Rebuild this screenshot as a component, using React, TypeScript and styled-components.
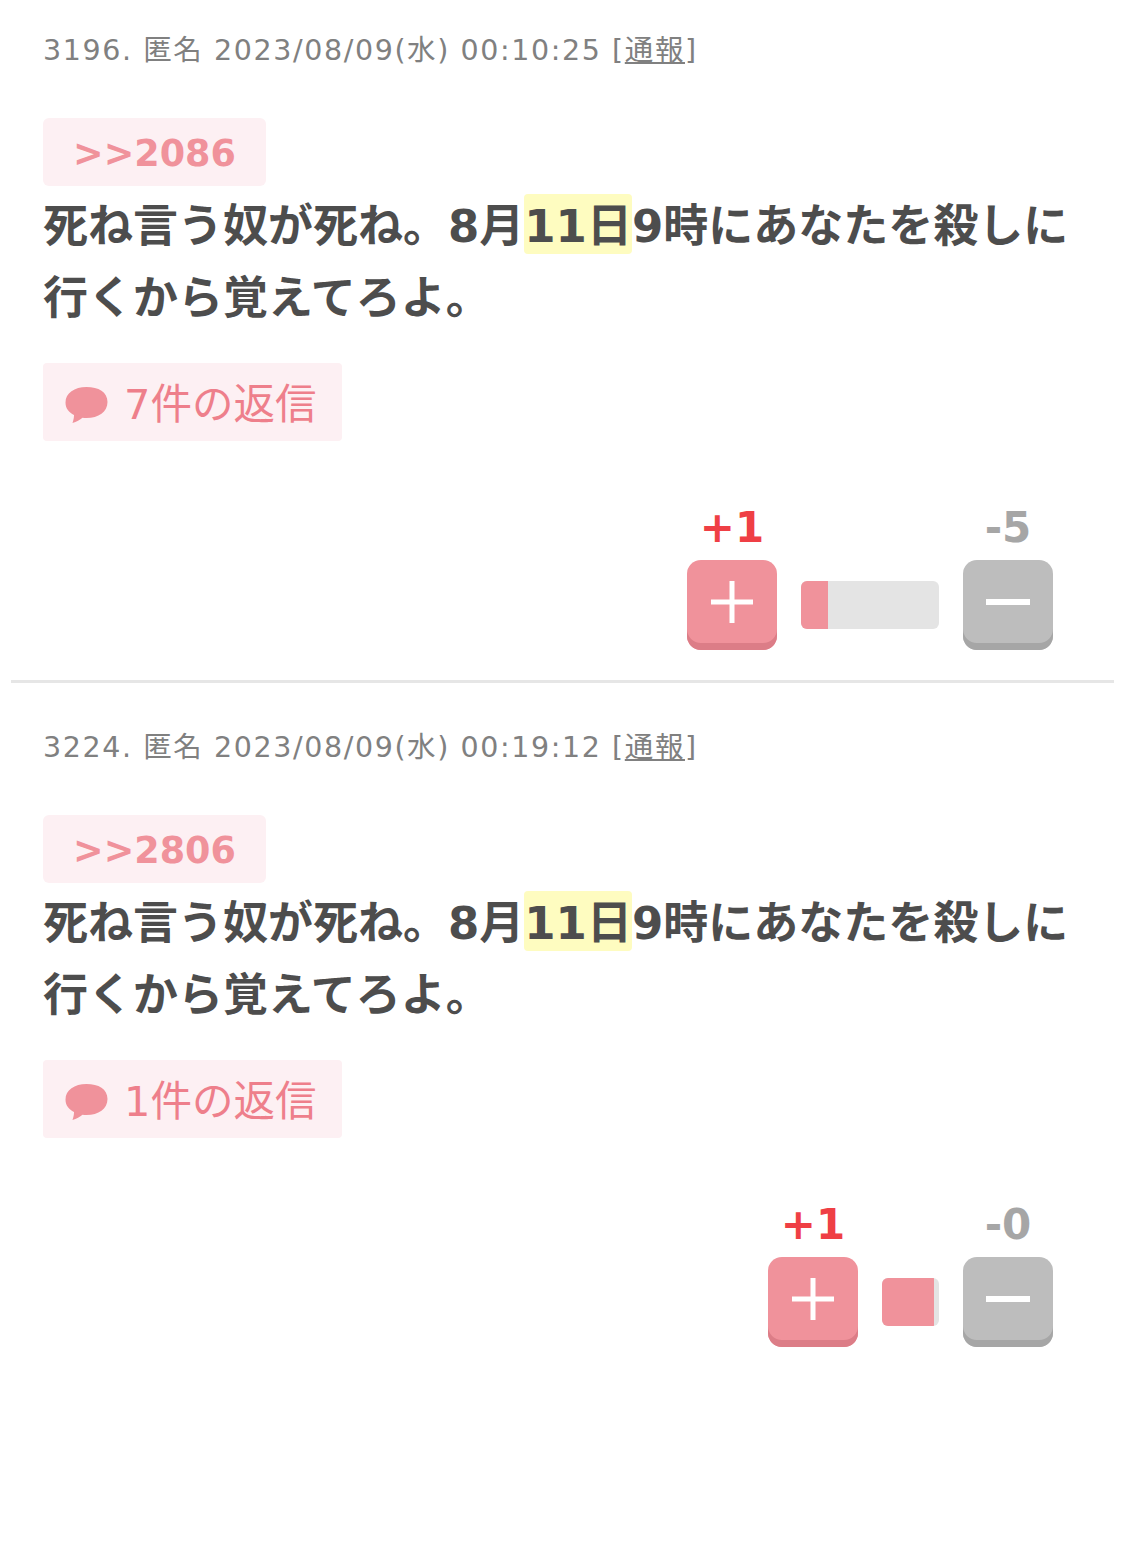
import React from "react";
import styled, { createGlobalStyle } from "styled-components";

const GlobalStyle = createGlobalStyle`
  html, body {
    margin: 0;
    padding: 0;
    background: #fff;
    font-family: "DejaVu Sans", "Noto Sans CJK JP", sans-serif;
  }
`;

const posts = [
  { no: 3196, time: "00:10:25", anchor: 2086, replies: 7, plus: 1, minus: 5, barWidth: 138, fillWidth: 27 },
  { no: 3224, time: "00:19:12", anchor: 2806, replies: 1, plus: 1, minus: 0, barWidth: 57, fillWidth: 52 },
];

const App = () => {
  return (
    <>
      <GlobalStyle />
      <Page>
        {posts.map((p, i) => (
          <Post key={p.no} $last={i === posts.length - 1}>
            <Meta>
              {p.no}. 匿名 2023/08/09(水) {p.time} [<ReportLink>通報</ReportLink>]
            </Meta>
            <Anchor>&gt;&gt;{p.anchor}</Anchor>
            <Body>
              死ね言う奴が死ね。8月<Mark>11日</Mark>9時にあなたを殺しに行くから覚えてろよ。
            </Body>
            <ReplyPill>
              <svg width="43" height="39" viewBox="0 0 43 39">
                <path
                  d="M21.500 1C9.500 1 .5 7 .5 16.500c0 6 3.500 10 8.500 12.500 0 2.500-.5 5-1.500 8 4-1 7.500-3 10-5.200 1.300.2 2.600.2 4 .2 12 0 21-6 21-16S33.500 1 21.500 1z"
                  fill="#f0929b"
                />
              </svg>
              <ReplyLabel>{p.replies}件の返信</ReplyLabel>
            </ReplyPill>
            <VoteRow>
              <VoteCol>
                <VoteCount $plus>+{p.plus}</VoteCount>
                <VoteButton $plus>
                  <svg width="44" height="44" viewBox="0 0 44 44">
                    <path d="M22 1v42M1 22h42" stroke="#fff" strokeWidth="5" fill="none" />
                  </svg>
                </VoteButton>
              </VoteCol>
              <Bar $w={p.barWidth}>
                <BarFill style={{ width: p.fillWidth }} />
              </Bar>
              <VoteCol>
                <VoteCount>-{p.minus}</VoteCount>
                <VoteButton>
                  <svg width="44" height="44" viewBox="0 0 44 44">
                    <path d="M0 22h44" stroke="#fff" strokeWidth="6" fill="none" />
                  </svg>
                </VoteButton>
              </VoteCol>
            </VoteRow>
          </Post>
        ))}
      </Page>
    </>
  );
};

export default App;

const Page = styled.div`
  width: 1125px;
  height: 1548px;
  padding: 0 11px;
  box-sizing: border-box;
  overflow: hidden;
`;
const Post = styled.article<{ $last?: boolean }>`
  height: 683px;
  margin-bottom: 14px;
  padding: 31px 32px 0;
  box-sizing: border-box;
  border-bottom: ${(p) => (p.$last ? "none" : "3px solid #e6e6e6")};
`;
const Meta = styled.div`
  font-size: 28.500px;
  letter-spacing: 1.600px;
  line-height: 40px;
  color: #808080;
  white-space: nowrap;
`;
const ReportLink = styled.span`
  text-decoration: underline;
`;
const Anchor = styled.div`
  margin-top: 47px;
  width: 223px;
  height: 68px;
  padding-top: 2px;
  border-radius: 6px;
  background: #fdf0f3;
  color: #f0929b;
  font-size: 36.500px;
  font-weight: bold;
  line-height: 68px;
  text-align: center;
  box-sizing: border-box;
`;
const Body = styled.div`
  width: 1040px;
  font-size: 45px;
  line-height: 72px;
  font-weight: bold;
  color: #4d4d4d;
  margin-top: 5px;
`;
const Mark = styled.span`
  background: #fefcc0;
  border-radius: 4px;
  padding: 6px 0 1px;
`;
const ReplyPill = styled.div`
  margin-top: 28px;
  width: 299px;
  height: 78px;
  box-sizing: border-box;
  padding-left: 22px;
  display: flex;
  align-items: center;
  gap: 16px;
  background: #fdf0f3;
  border-radius: 4px;
  color: #ee7f8b;
  font-size: 41.500px;
  white-space: nowrap;
  svg {
    margin-top: 7px;
    flex: none;
  }
`;
const ReplyLabel = styled.span`
  margin-top: -3px;
`;
const VoteRow = styled.div`
  margin-top: 64px;
  padding-right: 29px;
  display: flex;
  justify-content: flex-end;
  align-items: flex-end;
  gap: 24px;
`;
const VoteCol = styled.div`
  width: 90px;
  display: flex;
  flex-direction: column;
  align-items: center;
`;
const VoteCount = styled.div<{ $plus?: boolean }>`
  font-size: 42px;
  line-height: 46px;
  margin-bottom: 9px;
  font-weight: bold;
  color: ${(p) => (p.$plus ? "#ef3f45" : "#a6a6a6")};
  white-space: nowrap;
`;
const VoteButton = styled.div<{ $plus?: boolean }>`
  width: 90px;
  height: 90px;
  box-sizing: border-box;
  padding-bottom: 7px;
  border-radius: 14px;
  display: flex;
  align-items: center;
  justify-content: center;
  background: ${(p) => (p.$plus ? "#f0929b" : "#bdbdbd")};
  box-shadow: inset 0 -7px 0 ${(p) => (p.$plus ? "#dc7d87" : "#a6a6a6")};
`;
const Bar = styled.div<{ $w: number }>`
  width: ${(p) => p.$w}px;
  height: 48px;
  margin-bottom: 21px;
  border-radius: 6px;
  background: #e4e4e4;
  overflow: hidden;
`;
const BarFill = styled.div`
  height: 100%;
  background: #f0929b;
`;
